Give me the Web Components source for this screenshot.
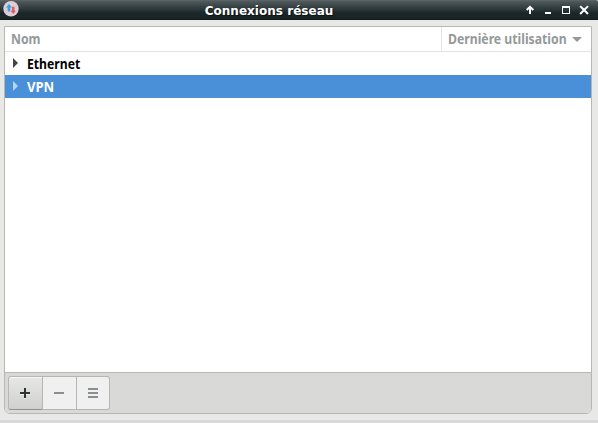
<!DOCTYPE html>
<html lang="fr"><head><meta charset="utf-8"><title>Connexions réseau</title>
<style>html,body{margin:0;height:100%;overflow:hidden;background:#d9d9dc}body{font:bold 13.33px "Noto Sans",sans-serif}</style></head>
<body>
<network-window></network-window>
<script>
const define=(name,html)=>customElements.define(name,class extends HTMLElement{
  constructor(){super();this.attachShadow({mode:'open'}).innerHTML=html;}
});
define('title-bar',`<style>
:host{display:grid;grid-template-columns:20px 1fr 80px;align-items:center;height:20px;box-sizing:border-box;background:linear-gradient(#5d6669 0,#4c5557 2px,#3b4547 6px,#293436 10px,#1b2628 13px,#1a2527 18px,#121819 20px);color:#fff;font:bold 12px/20px "DejaVu Sans",sans-serif;border-radius:0 2px 0 0}
.t{text-align:center;white-space:nowrap;padding-top:2px;line-height:18px;letter-spacing:.03px;text-shadow:1px 1px 1px #0009}
svg{display:block}
</style>
<svg width="20" height="20"><circle cx="11" cy="8.7" r="7.7" fill="#ddcdd4"/><path d="M9 4L12 7.5H10.3V11.5H7.7V7.5H6Z" fill="#36a2e5"/><path d="M13.2 14L10.5 10.7H12V6.7H14.5V10.7H16Z" fill="#e55b62"/></svg>
<span class="t"><slot></slot></span>
<svg width="80" height="20" viewBox="518 0 80 20" fill="#fff"><path d="M526.7 10L530 6.8L533.3 10M530 7V14" fill="none" stroke="#fff" stroke-width="2"/><path d="M545 12h6v2h-6zM562 6h8v8h-8zM563 8v5h6V8z" fill-rule="evenodd"/><path d="M580.8 6.8l6.5 6.5M587.3 6.8l-6.5 6.5" stroke="#fff" stroke-width="2" stroke-linecap="square"/></svg>`);
define('list-header',`<style>
:host{display:grid;grid-template-columns:437px 1fr;height:25px;box-sizing:border-box;border-bottom:1px solid #e4e4e3;color:#949999;line-height:24px;white-space:nowrap}
.a{padding-left:6px;border-right:1px solid #e4e4e3}.b{display:grid;grid-template-columns:124px 10px;align-items:center;padding-left:6px}
.x{display:block;transform:scaleX(.918);transform-origin:0 0}
</style><div class="a"><span class="x"><slot name="name"></slot></span></div><div class="b"><span class="x"><slot name="used"></slot></span><svg width="10" height="5"><path d="M0 0H10L5 5Z" fill="#949999"/></svg></div>`);
define('tree-row',`<style>
:host{display:flex;align-items:center;height:23px;padding-left:8px;gap:9px;color:#000;--arrow:#454545;--squeeze:.914;line-height:22px}
:host([selected]){background:#4a90d9;color:#fff;--arrow:#b7d3f0;--squeeze:.98}
svg{margin-bottom:1px}
span{padding-top:1px;transform:scaleX(var(--squeeze));transform-origin:0 0}
</style><svg width="5" height="10"><path d="M0 0L5 5L0 10Z" fill="var(--arrow)"/></svg><span><slot></slot></span>`);
define('tool-button',`<style>
:host{display:flex;box-sizing:border-box;width:34px;height:34px;padding-right:1px;border:1px solid #b6b6b3;border-left-width:0;background:#f0f0f0;align-items:center;justify-content:center}
:host([active]){width:35px;border-left-width:1px;border-radius:3px 0 0 3px;border-bottom-color:#92928f;background:linear-gradient(#e7e7e5,#d0d0ce);box-shadow:inset 0 1px #f8f8f8}
:host([last]){width:33px;padding-right:0;border-radius:0 3px 3px 0}
::slotted(svg){display:block}
</style><slot></slot>`);
define('tool-strip',`<style>
:host{display:flex;box-sizing:border-box;height:41px;padding:3px 3px;border-top:1px solid #b6b6b3;background:#d9d9d7}
</style><slot></slot>`);
define('network-window',`<style>
:host{display:block;height:420px;background:#e8e8e6}
.frame{display:flex;flex-direction:column;box-sizing:border-box;width:588px;height:388px;margin:6px 0 0 4px;border:1px solid #b6b6b3;border-radius:0 0 6px 6px;background:#fff;overflow:hidden}
.space{flex:1}
</style>
<title-bar>Connexions réseau</title-bar>
<div class="frame"><list-header><span slot="name">Nom</span><span slot="used">Dernière utilisation</span></list-header>
<tree-row>Ethernet</tree-row><tree-row selected>VPN</tree-row><div class="space"></div>
<tool-strip><tool-button active><svg width="12" height="12"><path d="M1 6H11M6 1V11" transform="translate(0 1)" stroke="#fff" stroke-width="2" opacity=".6"/><path d="M1 6H11M6 1V11" stroke="#2e3436" stroke-width="2"/></svg></tool-button>
<tool-button><svg width="10" height="10"><path d="M0 4H10V6H0Z" fill="#8b8e8f"/></svg></tool-button>
<tool-button last><svg width="10" height="10"><path d="M0 0H10V2H0ZM0 4H10V6H0ZM0 8H10V10H0Z" fill="#8b8e8f"/></svg></tool-button></tool-strip></div>`);
</script></body></html>
